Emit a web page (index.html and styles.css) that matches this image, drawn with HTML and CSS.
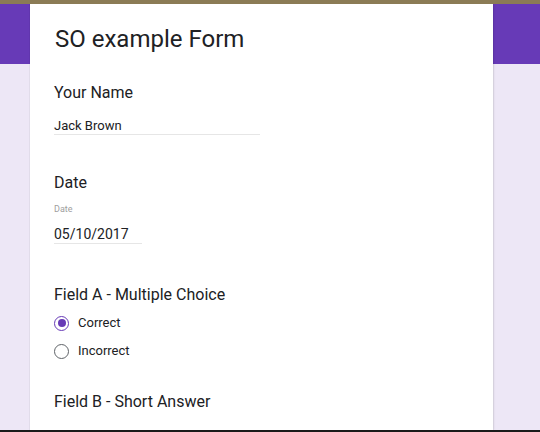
FILE: index.html
```html
<!DOCTYPE html>
<html>
<head>
<meta charset="utf-8">
<link rel="stylesheet" href="styles.css">
</head>
<body>
<div class="page">
  <div class="topbar"></div>
  <main class="stage">
    <div class="card">
      <h1 class="title">SO example Form</h1>

      <section class="question q-name">
        <h2 class="q-title">Your Name</h2>
        <div class="text-input name-input">Jack Brown</div>
      </section>

      <section class="question q-date">
        <h2 class="q-title">Date</h2>
        <div class="date-label">Date</div>
        <div class="text-input date-input">05/10/2017</div>
      </section>

      <section class="question q-choice">
        <h2 class="q-title">Field A - Multiple Choice</h2>
        <div class="options">
          <div class="option"><span class="radio checked"></span><span class="opt-label">Correct</span></div>
          <div class="option"><span class="radio"></span><span class="opt-label">Incorrect</span></div>
        </div>
      </section>

      <section class="question q-short">
        <h2 class="q-title">Field B - Short Answer</h2>
      </section>
    </div>
  </main>
  <div class="bottombar"></div>
</div>
</body>
</html>
```

FILE: styles.css
```css
html, body {
  margin: 0;
  padding: 0;
}
body {
  font-family: Roboto, "Liberation Sans", Arial, sans-serif;
  color: #202124;
  background: #ede7f6;
}
.page {
  height: 432px;
  display: flex;
  flex-direction: column;
  overflow: hidden;
}
.topbar {
  height: 4px;
  flex: none;
  background: #8b7b55;
}
.stage {
  flex: 1;
  overflow: hidden;
  background: linear-gradient(to bottom, #673ab7 0, #673ab7 60px, #ede7f6 60px);
  padding-left: 30px;
}
.bottombar {
  height: 2px;
  flex: none;
  background: #1a1a1a;
}
.card {
  width: 463px;
  box-sizing: border-box;
  min-height: 100%;
  background: #fff;
  padding: 21px 24px 0 24px;
  box-shadow: 0 0 1px rgba(0,0,0,0.25), 1px 0 2px rgba(0,0,0,0.08);
}
.title {
  margin: 0;
  font-weight: 400;
  font-size: 24px;
  line-height: 28px;
  color: #202124;
  padding-left: 1px;
}
.question {
  margin: 0;
}
.q-title {
  margin: 0;
  font-weight: 400;
  font-size: 16px;
  line-height: 20px;
  color: #202124;
}
.q-name { margin-top: 30px; }
.text-input {
  border-bottom: 1px solid #e6e6e6;
  color: #202124;
}
.name-input {
  width: 206px;
  margin-top: 15px;
  font-size: 13px;
  line-height: 16px;
}
.q-date { margin-top: 38px; }
.date-label {
  margin-top: 11px;
  font-size: 9px;
  line-height: 11px;
  color: #9e9e9e;
}
.date-input {
  width: 88px;
  margin-top: 11px;
  font-size: 14px;
  line-height: 17px;
}
.q-choice { margin-top: 41px; }
.options {
  margin-top: 4px;
  display: flex;
  flex-direction: column;
}
.option {
  height: 28px;
  display: flex;
  align-items: center;
  gap: 9px;
}
.radio {
  width: 15px;
  height: 15px;
  box-sizing: border-box;
  border: 1.5px solid #5f6368;
  border-radius: 50%;
  display: inline-flex;
  align-items: center;
  justify-content: center;
}
.radio.checked {
  border-color: #673ab7;
}
.radio.checked::after {
  content: "";
  width: 8px;
  height: 8px;
  border-radius: 50%;
  background: #673ab7;
}
.opt-label {
  font-size: 13px;
  line-height: 16px;
  color: #202124;
}
.q-short { margin-top: 27px; }
```
